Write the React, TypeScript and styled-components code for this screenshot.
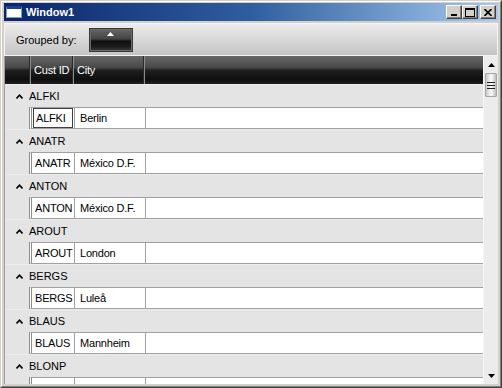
import React from 'react';
import styled, {createGlobalStyle} from 'styled-components';

const GlobalStyle = createGlobalStyle`
  html, body {
    margin: 0;
    padding: 0;
    overflow: hidden;
    background: #fff;
  }
  * {
    box-sizing: border-box;
  }
`;

const Frame = styled.div`
  width: 502px;
  height: 388px;
  display: flex;
  flex-direction: column;
  background: #d4d0c8;
  border: 1px solid;
  border-color: #d4d0c8 #404040 #404040 #d4d0c8;
  font-family: Tahoma, "Liberation Sans", Arial, sans-serif;
  font-size: 11px;
  color: #000;
`;

const FrameInner = styled.div`
  flex: 1;
  display: flex;
  flex-direction: column;
  border: 1px solid;
  border-color: #fff #808080 #808080 #fff;
  padding: 1px 2px 2px 2px;
  min-height: 0;
`;

const TitleBar = styled.div`
  height: 18px;
  flex: none;
  display: flex;
  align-items: center;
  padding: 0 2px 0 2px;
  background: linear-gradient(90deg, #0a246a 0%, #2f5e9e 50%, #a6caf0 100%);
`;

const TitleIcon = styled.div`
  width: 16px;
  height: 12px;
  background: #fff;
  border: 1px solid #7b9ebd;
  border-top: 3px solid #1b3f9a;
  margin-right: 4px;
`;

const TitleText = styled.span`
  flex: 1;
  color: #fff;
  font-weight: bold;
  font-size: 11px;
`;

const CaptionButton = styled.button<{ $gap?: number }>`
  width: 16px;
  height: 14px;
  padding: 0;
  margin-left: ${p => p.$gap ?? 0}px;
  background: #d4d0c8;
  border: 1px solid;
  border-color: #fff #404040 #404040 #fff;
  box-shadow: inset -1px -1px 0 #808080;
  display: flex;
  align-items: center;
  justify-content: center;
  svg {
    display: block;
  }
`;

const Client = styled.div`
  flex: 1;
  display: flex;
  flex-direction: column;
  margin-top: 2px;
  min-height: 0;
  background: #e4e4e4;
`;

const Toolbar = styled.div`
  height: 33px;
  flex: none;
  display: flex;
  align-items: center;
  gap: 12px;
  padding-left: 11px;
  border: 1px solid #f4f4f6;
  background: linear-gradient(#ececec, #c4c4c4);
`;

const GroupButton = styled.div`
  width: 44px;
  height: 24px;
  margin-top: 1px;
  display: flex;
  justify-content: center;
  padding-top: 3px;
  border: 1px solid #3a3a3a;
  box-shadow: inset 0 0 0 1px #6a6a6a;
  background: linear-gradient(#666 0%, #444 45%, #101010 55%, #1c1c1c 80%, #3a3a3a 100%);
`;

const Grid = styled.div`
  flex: 1;
  display: flex;
  min-height: 0;
`;

const Main = styled.div`
  flex: 1;
  display: flex;
  flex-direction: column;
  min-width: 0;
  overflow: hidden;
  border-left: 1px solid #a0a0a0;
`;

const Header = styled.div`
  height: 28px;
  flex: none;
  display: flex;
  background: linear-gradient(#666 0%, #4a4a4a 40%, #1e1e1e 52%, #0e0e0e 85%, #222 100%);
  color: #fff;
`;

const HeaderCell = styled.div<{ $w?: number }>`
  width: ${p => (p.$w ? `${p.$w}px` : 'auto')};
  flex: ${p => (p.$w ? 'none' : '1')};
  display: flex;
  align-items: center;
  padding-left: 3px;
  white-space: nowrap;
  overflow: hidden;
  letter-spacing: -0.2px;
  border-right: ${p => (p.$w ? '1px solid #8c8c8c' : 'none')};
  box-shadow: ${p => (p.$w ? 'inset -1px 0 0 #2a2a2a' : 'none')};
`;

const Body = styled.div`
  flex: 1;
  overflow: hidden;
`;

const GroupHeader = styled.div`
  height: 23px;
  display: flex;
  align-items: center;
  padding-left: 11px;
  gap: 6px;
  background: #e4e4e4;
  border-top: 1px solid #ececec;
`;

const Row = styled.div`
  height: 22px;
  margin-left: 24px;
  display: flex;
  background: #fff;
  border-top: 1px solid #a0a0a0;
  border-bottom: 1px solid #a0a0a0;
  border-left: 3px double #8c8c8c;
`;

const Cell = styled.div<{ $w?: number; $pad?: number }>`
  width: ${p => (p.$w ? `${p.$w}px` : 'auto')};
  flex: ${p => (p.$w ? 'none' : '1')};
  display: flex;
  align-items: center;
  padding-left: ${p => p.$pad ?? 3}px;
  white-space: nowrap;
  overflow: hidden;
  letter-spacing: -0.2px;
  border-right: ${p => (p.$w ? '1px solid #a0a0a0' : 'none')};
`;

const FocusBox = styled.div`
  align-self: stretch;
  display: flex;
  align-items: center;
  margin: 0 1px 0 -2px;
  padding-left: 2px;
  flex: 1;
  border: 1px solid #404040;
`;

const ScrollBar = styled.div`
  width: 15px;
  flex: none;
  display: flex;
  flex-direction: column;
  background: #ececec;
  border-left: 1px solid #f6f6f6;
`;

const Arrow = styled.div`
  height: 17px;
  flex: none;
  display: flex;
  align-items: center;
  justify-content: center;
`;

const Track = styled.div`
  flex: 1;
`;

const Thumb = styled.div`
  height: 24px;
  margin: 0 1px;
  display: flex;
  flex-direction: column;
  align-items: center;
  justify-content: center;
  gap: 2px;
  border: 1px solid #a6a6a6;
  border-radius: 1px;
  background: linear-gradient(90deg, #c8c8c8, #f4f4f4 45%, #f4f4f4 60%, #bcbcbc);
`;

const Grip = styled.div`
  width: 8px;
  height: 1px;
  background: #222;
`;

const customers = [
  {id: 'ALFKI', city: 'Berlin'},
  {id: 'ANATR', city: 'México D.F.'},
  {id: 'ANTON', city: 'México D.F.'},
  {id: 'AROUT', city: 'London'},
  {id: 'BERGS', city: 'Luleå'},
  {id: 'BLAUS', city: 'Mannheim'},
  {id: 'BLONP', city: ''},
];

const Chevron = () => (
  <svg width="7" height="5" viewBox="0 0 7 5">
    <polyline points="0.5,4.5 3.5,1.2 6.5,4.5" fill="none" stroke="#000" strokeWidth="1.6" />
  </svg>
);

function App() {
  return (
    <>
      <GlobalStyle />
      <Frame>
        <FrameInner>
          <TitleBar>
            <TitleIcon />
            <TitleText>Window1</TitleText>
            <CaptionButton>
              <svg width="8" height="8" viewBox="0 0 8 8"><rect x="1" y="6" width="6" height="2" fill="#000" /></svg>
            </CaptionButton>
            <CaptionButton>
              <svg width="10" height="9" viewBox="0 0 10 9">
                <rect x="0.5" y="0.5" width="9" height="8" fill="none" stroke="#000" />
                <rect x="0" y="0" width="10" height="2" fill="#000" />
              </svg>
            </CaptionButton>
            <CaptionButton $gap={2}>
              <svg width="8" height="7" viewBox="0 0 8 7">
                <path d="M0.5 0 L7.5 7 M7.5 0 L0.5 7" stroke="#000" strokeWidth="1.6" />
              </svg>
            </CaptionButton>
          </TitleBar>
          <Client>
            <Toolbar>
              <span>Grouped by:</span>
              <GroupButton>
                <svg width="7" height="4" viewBox="0 0 7 4"><polygon points="0,4 3.5,0 7,4" fill="#fff" /></svg>
              </GroupButton>
            </Toolbar>
            <Grid>
              <Main>
                <Header>
                  <HeaderCell $w={26} />
                  <HeaderCell $w={43}>Cust ID</HeaderCell>
                  <HeaderCell $w={71}>City</HeaderCell>
                  <HeaderCell />
                </Header>
                <Body>
                  {customers.map((c, i) => (
                    <div key={c.id}>
                      <GroupHeader>
                        <Chevron />
                        <span>{c.id}</span>
                      </GroupHeader>
                      {c.city && (
                        <Row>
                          <Cell $w={43}>
                            {i === 0 ? <FocusBox>{c.id}</FocusBox> : c.id}
                          </Cell>
                          <Cell $w={71} $pad={5}>{c.city}</Cell>
                          <Cell />
                        </Row>
                      )}
                      {!c.city && (
                        <Row>
                          <Cell $w={43} />
                          <Cell $w={71} />
                          <Cell />
                        </Row>
                      )}
                    </div>
                  ))}
                </Body>
              </Main>
              <ScrollBar>
                <Arrow>
                  <svg width="7" height="4" viewBox="0 0 7 4"><polygon points="0,4 3.5,0 7,4" fill="#000" /></svg>
                </Arrow>
                <Thumb>
                  <Grip />
                  <Grip />
                  <Grip />
                </Thumb>
                <Track />
                <Arrow>
                  <svg width="7" height="4" viewBox="0 0 7 4"><polygon points="0,0 3.5,4 7,0" fill="#000" /></svg>
                </Arrow>
              </ScrollBar>
            </Grid>
          </Client>
        </FrameInner>
      </Frame>
    </>
  );
}

export default App;
